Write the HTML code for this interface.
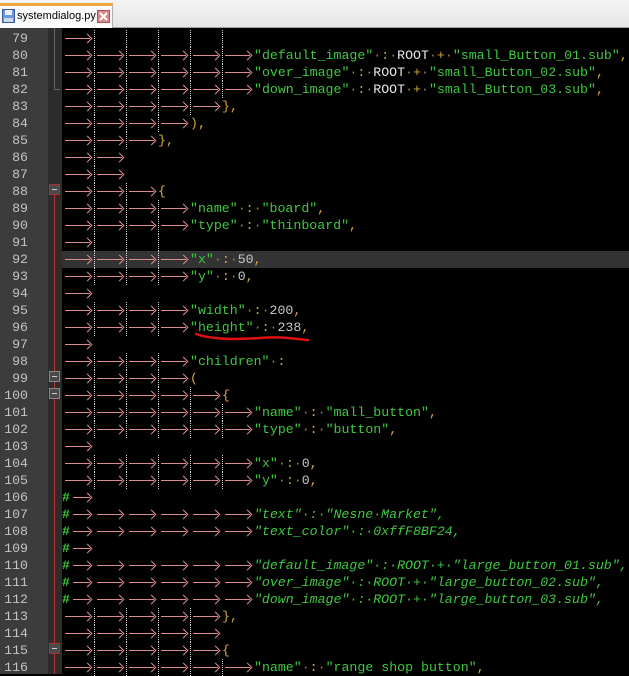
<!DOCTYPE html>
<html><head><meta charset="utf-8"><style>
*{margin:0;padding:0;box-sizing:border-box}
body{width:629px;height:674px;overflow:hidden;background:#000;position:relative;font-family:"Liberation Mono",monospace}
#bar{position:absolute;left:0;top:0;width:629px;height:28px;background:linear-gradient(#f4f4f4,#e6e6e6);border-bottom:1px solid #a0a0a0}
#tab{position:absolute;left:0;top:3px;width:113px;height:25px;background:#fcfcfc;border-top:3px solid #f4a640;border-right:1px solid #b0b0b0}
#tab span{position:absolute;left:17px;top:4px;font:11px "Liberation Sans",sans-serif;color:#000}
#gut{position:absolute;left:0;top:28px;width:48px;height:646px;background:#3c3c3c}
#fold{position:absolute;left:48px;top:28px;width:14px;height:646px;background:#2c2c2c}
.row{position:absolute;left:0;height:17px;width:629px;font-size:13.25px;line-height:17px;white-space:pre}
.n{position:absolute;left:0;width:28px;text-align:right;color:#c4c4c4}
.c{position:absolute;left:62px;top:0;height:17px}
.t{display:inline-block;width:32px;height:17px;position:relative;vertical-align:top}
.t::before{content:"";position:absolute;left:3px;right:4px;top:8px;height:1px;background:#e08c8c}
.t::after{content:"";position:absolute;right:3px;top:5px;width:6px;height:6px;border-top:1px solid #e08c8c;border-right:1px solid #e08c8c;transform:rotate(45deg);transform-origin:center}
.t.h{width:24px}
.g{position:absolute;top:0;width:0;height:17px;border-left:1px dotted #d8d8d8}
.s{color:#3ec83e}.o{color:#d8a838}.d{color:#9a8050}.w{color:#e8e8e8}.m{color:#c8c8c8}
.cm{color:#3ec83e;font-style:italic}.hs{color:#3ec83e;font-weight:bold}
.hl{background:#333}
.box{position:absolute;left:49px;width:11px;height:11px;border:1px solid #b03030;background:#4a4a4a}
.box::after{content:"";position:absolute;left:2px;top:4px;width:5px;height:1px;background:#ccc}
</style></head><body>
<div id="bar"><div id="tab">
<svg style="position:absolute;left:2px;top:3px" width="13" height="14"><rect x="0.5" y="0.5" width="12" height="13" fill="#6a9ad8" stroke="#3a5a9a"/><rect x="3" y="1" width="7" height="5" fill="#eef"/><rect x="2" y="9" width="9" height="4" fill="#c8d8f0"/></svg>
<span>systemdialog.py</span>
<svg style="position:absolute;left:97px;top:4px" width="13" height="13"><rect x="0.5" y="0.5" width="12" height="12" fill="#d88" stroke="#b05050"/><path d="M3 3L10 10M10 3L3 10" stroke="#fff" stroke-width="2"/></svg>
</div></div>
<div id="gut"></div><div id="fold"></div>
<div style="position:absolute;left:54px;top:190px;width:1px;height:484px;background:#c03030"></div>
<div style="position:absolute;left:54px;top:28px;width:1px;height:62px;background:#666"></div>
<div style="position:absolute;left:54px;top:89px;width:6px;height:1px;background:#666"></div>
<div class="box" style="top:184px"></div>
<div class="box" style="top:371px;border-color:#888"></div>
<div class="box" style="top:388px;border-color:#888"></div>
<div class="box" style="top:643px"></div>

<div class="row" style="top:30px"><span class="n">79</span><span class="c"><span class="t"></span></span><i class="g" style="left:94px"></i><i class="g" style="left:126px"></i><i class="g" style="left:158px"></i><i class="g" style="left:190px"></i><i class="g" style="left:222px"></i></div>
<div class="row" style="top:47px"><span class="n">80</span><span class="c"><span class="t"></span><span class="t"></span><span class="t"></span><span class="t"></span><span class="t"></span><span class="t"></span><span class="s">"default_image"</span><span class="d">·</span><span class="o">:</span><span class="d">·</span><span class="w">ROOT</span><span class="d">·</span><span class="o">+</span><span class="d">·</span><span class="s">"small_Button_01.sub"</span><span class="o">,</span></span><i class="g" style="left:94px"></i><i class="g" style="left:126px"></i><i class="g" style="left:158px"></i><i class="g" style="left:190px"></i><i class="g" style="left:222px"></i></div>
<div class="row" style="top:64px"><span class="n">81</span><span class="c"><span class="t"></span><span class="t"></span><span class="t"></span><span class="t"></span><span class="t"></span><span class="t"></span><span class="s">"over_image"</span><span class="d">·</span><span class="o">:</span><span class="d">·</span><span class="w">ROOT</span><span class="d">·</span><span class="o">+</span><span class="d">·</span><span class="s">"small_Button_02.sub"</span><span class="o">,</span></span><i class="g" style="left:94px"></i><i class="g" style="left:126px"></i><i class="g" style="left:158px"></i><i class="g" style="left:190px"></i><i class="g" style="left:222px"></i></div>
<div class="row" style="top:81px"><span class="n">82</span><span class="c"><span class="t"></span><span class="t"></span><span class="t"></span><span class="t"></span><span class="t"></span><span class="t"></span><span class="s">"down_image"</span><span class="d">·</span><span class="o">:</span><span class="d">·</span><span class="w">ROOT</span><span class="d">·</span><span class="o">+</span><span class="d">·</span><span class="s">"small_Button_03.sub"</span><span class="o">,</span></span><i class="g" style="left:94px"></i><i class="g" style="left:126px"></i><i class="g" style="left:158px"></i><i class="g" style="left:190px"></i><i class="g" style="left:222px"></i></div>
<div class="row" style="top:98px"><span class="n">83</span><span class="c"><span class="t"></span><span class="t"></span><span class="t"></span><span class="t"></span><span class="t"></span><span class="o">},</span></span><i class="g" style="left:94px"></i><i class="g" style="left:126px"></i><i class="g" style="left:158px"></i><i class="g" style="left:190px"></i></div>
<div class="row" style="top:115px"><span class="n">84</span><span class="c"><span class="t"></span><span class="t"></span><span class="t"></span><span class="t"></span><span class="o">),</span></span><i class="g" style="left:94px"></i><i class="g" style="left:126px"></i><i class="g" style="left:158px"></i></div>
<div class="row" style="top:132px"><span class="n">85</span><span class="c"><span class="t"></span><span class="t"></span><span class="t"></span><span class="o">},</span></span><i class="g" style="left:94px"></i><i class="g" style="left:126px"></i></div>
<div class="row" style="top:149px"><span class="n">86</span><span class="c"><span class="t"></span><span class="t"></span></span><i class="g" style="left:94px"></i></div>
<div class="row" style="top:166px"><span class="n">87</span><span class="c"><span class="t"></span><span class="t"></span></span><i class="g" style="left:94px"></i></div>
<div class="row" style="top:183px"><span class="n">88</span><span class="c"><span class="t"></span><span class="t"></span><span class="t"></span><span class="o">{</span></span><i class="g" style="left:94px"></i><i class="g" style="left:126px"></i></div>
<div class="row" style="top:200px"><span class="n">89</span><span class="c"><span class="t"></span><span class="t"></span><span class="t"></span><span class="t"></span><span class="s">"name"</span><span class="d">·</span><span class="o">:</span><span class="d">·</span><span class="s">"board"</span><span class="o">,</span></span><i class="g" style="left:94px"></i><i class="g" style="left:126px"></i><i class="g" style="left:158px"></i></div>
<div class="row" style="top:217px"><span class="n">90</span><span class="c"><span class="t"></span><span class="t"></span><span class="t"></span><span class="t"></span><span class="s">"type"</span><span class="d">·</span><span class="o">:</span><span class="d">·</span><span class="s">"thinboard"</span><span class="o">,</span></span><i class="g" style="left:94px"></i><i class="g" style="left:126px"></i><i class="g" style="left:158px"></i></div>
<div class="row" style="top:234px"><span class="n">91</span><span class="c"><span class="t"></span></span><i class="g" style="left:94px"></i><i class="g" style="left:126px"></i><i class="g" style="left:158px"></i></div>
<div class="row" style="top:251px"><span class="n">92</span><span class="c hl" style="width:567px"><span class="t"></span><span class="t"></span><span class="t"></span><span class="t"></span><span class="s">"x"</span><span class="d">·</span><span class="o">:</span><span class="d">·</span><span class="m">50</span><span class="o">,</span></span><i class="g" style="left:94px"></i><i class="g" style="left:126px"></i><i class="g" style="left:158px"></i></div>
<div class="row" style="top:268px"><span class="n">93</span><span class="c"><span class="t"></span><span class="t"></span><span class="t"></span><span class="t"></span><span class="s">"y"</span><span class="d">·</span><span class="o">:</span><span class="d">·</span><span class="m">0</span><span class="o">,</span></span><i class="g" style="left:94px"></i><i class="g" style="left:126px"></i><i class="g" style="left:158px"></i></div>
<div class="row" style="top:285px"><span class="n">94</span><span class="c"><span class="t"></span></span></div>
<div class="row" style="top:302px"><span class="n">95</span><span class="c"><span class="t"></span><span class="t"></span><span class="t"></span><span class="t"></span><span class="s">"width"</span><span class="d">·</span><span class="o">:</span><span class="d">·</span><span class="m">200</span><span class="o">,</span></span><i class="g" style="left:94px"></i><i class="g" style="left:126px"></i><i class="g" style="left:158px"></i></div>
<div class="row" style="top:319px"><span class="n">96</span><span class="c"><span class="t"></span><span class="t"></span><span class="t"></span><span class="t"></span><span class="s">"height"</span><span class="d">·</span><span class="o">:</span><span class="d">·</span><span class="m">238</span><span class="o">,</span></span><i class="g" style="left:94px"></i><i class="g" style="left:126px"></i><i class="g" style="left:158px"></i></div>
<div class="row" style="top:336px"><span class="n">97</span><span class="c"><span class="t"></span></span></div>
<div class="row" style="top:353px"><span class="n">98</span><span class="c"><span class="t"></span><span class="t"></span><span class="t"></span><span class="t"></span><span class="s">"children"</span><span class="d">·</span><span class="o">:</span></span><i class="g" style="left:94px"></i><i class="g" style="left:126px"></i><i class="g" style="left:158px"></i></div>
<div class="row" style="top:370px"><span class="n">99</span><span class="c"><span class="t"></span><span class="t"></span><span class="t"></span><span class="t"></span><span class="o">(</span></span><i class="g" style="left:94px"></i><i class="g" style="left:126px"></i><i class="g" style="left:158px"></i></div>
<div class="row" style="top:387px"><span class="n">100</span><span class="c"><span class="t"></span><span class="t"></span><span class="t"></span><span class="t"></span><span class="t"></span><span class="o">{</span></span><i class="g" style="left:94px"></i><i class="g" style="left:126px"></i><i class="g" style="left:158px"></i><i class="g" style="left:190px"></i></div>
<div class="row" style="top:404px"><span class="n">101</span><span class="c"><span class="t"></span><span class="t"></span><span class="t"></span><span class="t"></span><span class="t"></span><span class="t"></span><span class="s">"name"</span><span class="d">·</span><span class="o">:</span><span class="d">·</span><span class="s">"mall_button"</span><span class="o">,</span></span><i class="g" style="left:94px"></i><i class="g" style="left:126px"></i><i class="g" style="left:158px"></i><i class="g" style="left:190px"></i><i class="g" style="left:222px"></i></div>
<div class="row" style="top:421px"><span class="n">102</span><span class="c"><span class="t"></span><span class="t"></span><span class="t"></span><span class="t"></span><span class="t"></span><span class="t"></span><span class="s">"type"</span><span class="d">·</span><span class="o">:</span><span class="d">·</span><span class="s">"button"</span><span class="o">,</span></span><i class="g" style="left:94px"></i><i class="g" style="left:126px"></i><i class="g" style="left:158px"></i><i class="g" style="left:190px"></i><i class="g" style="left:222px"></i></div>
<div class="row" style="top:438px"><span class="n">103</span><span class="c"><span class="t"></span></span></div>
<div class="row" style="top:455px"><span class="n">104</span><span class="c"><span class="t"></span><span class="t"></span><span class="t"></span><span class="t"></span><span class="t"></span><span class="t"></span><span class="s">"x"</span><span class="d">·</span><span class="o">:</span><span class="d">·</span><span class="m">0</span><span class="o">,</span></span><i class="g" style="left:94px"></i><i class="g" style="left:126px"></i><i class="g" style="left:158px"></i><i class="g" style="left:190px"></i><i class="g" style="left:222px"></i></div>
<div class="row" style="top:472px"><span class="n">105</span><span class="c"><span class="t"></span><span class="t"></span><span class="t"></span><span class="t"></span><span class="t"></span><span class="t"></span><span class="s">"y"</span><span class="d">·</span><span class="o">:</span><span class="d">·</span><span class="m">0</span><span class="o">,</span></span><i class="g" style="left:94px"></i><i class="g" style="left:126px"></i><i class="g" style="left:158px"></i><i class="g" style="left:190px"></i><i class="g" style="left:222px"></i></div>
<div class="row" style="top:489px"><span class="n">106</span><span class="c"><span class="hs">#</span><span class="t h"></span></span></div>
<div class="row" style="top:506px"><span class="n">107</span><span class="c"><span class="hs">#</span><span class="t h"></span><span class="t"></span><span class="t"></span><span class="t"></span><span class="t"></span><span class="t"></span><span class="cm">"text"·:·"Nesne·Market",</span></span></div>
<div class="row" style="top:523px"><span class="n">108</span><span class="c"><span class="hs">#</span><span class="t h"></span><span class="t"></span><span class="t"></span><span class="t"></span><span class="t"></span><span class="t"></span><span class="cm">"text_color"·:·0xffF8BF24,</span></span></div>
<div class="row" style="top:540px"><span class="n">109</span><span class="c"><span class="hs">#</span><span class="t h"></span></span></div>
<div class="row" style="top:557px"><span class="n">110</span><span class="c"><span class="hs">#</span><span class="t h"></span><span class="t"></span><span class="t"></span><span class="t"></span><span class="t"></span><span class="t"></span><span class="cm">"default_image"·:·ROOT·+·"large_button_01.sub",</span></span></div>
<div class="row" style="top:574px"><span class="n">111</span><span class="c"><span class="hs">#</span><span class="t h"></span><span class="t"></span><span class="t"></span><span class="t"></span><span class="t"></span><span class="t"></span><span class="cm">"over_image"·:·ROOT·+·"large_button_02.sub",</span></span></div>
<div class="row" style="top:591px"><span class="n">112</span><span class="c"><span class="hs">#</span><span class="t h"></span><span class="t"></span><span class="t"></span><span class="t"></span><span class="t"></span><span class="t"></span><span class="cm">"down_image"·:·ROOT·+·"large_button_03.sub",</span></span></div>
<div class="row" style="top:608px"><span class="n">113</span><span class="c"><span class="t"></span><span class="t"></span><span class="t"></span><span class="t"></span><span class="t"></span><span class="o">},</span></span><i class="g" style="left:94px"></i><i class="g" style="left:126px"></i><i class="g" style="left:158px"></i><i class="g" style="left:190px"></i></div>
<div class="row" style="top:625px"><span class="n">114</span><span class="c"><span class="t"></span><span class="t"></span><span class="t"></span><span class="t"></span><span class="t"></span></span><i class="g" style="left:94px"></i><i class="g" style="left:126px"></i><i class="g" style="left:158px"></i><i class="g" style="left:190px"></i></div>
<div class="row" style="top:642px"><span class="n">115</span><span class="c"><span class="t"></span><span class="t"></span><span class="t"></span><span class="t"></span><span class="t"></span><span class="o">{</span></span><i class="g" style="left:94px"></i><i class="g" style="left:126px"></i><i class="g" style="left:158px"></i><i class="g" style="left:190px"></i></div>
<div class="row" style="top:659px"><span class="n">116</span><span class="c"><span class="t"></span><span class="t"></span><span class="t"></span><span class="t"></span><span class="t"></span><span class="t"></span><span class="s">"name"</span><span class="d">·</span><span class="o">:</span><span class="d">·</span><span class="s">"range shop button"</span><span class="o">,</span></span><i class="g" style="left:94px"></i><i class="g" style="left:126px"></i><i class="g" style="left:158px"></i><i class="g" style="left:190px"></i><i class="g" style="left:222px"></i></div>

<svg style="position:absolute;left:190px;top:330px" width="125" height="16"><path d="M6 4 C20 9 40 10 70 8 C90 6 105 9 118 10" stroke="#e01010" stroke-width="2.5" fill="none" stroke-linecap="round"/></svg>
</body></html>
